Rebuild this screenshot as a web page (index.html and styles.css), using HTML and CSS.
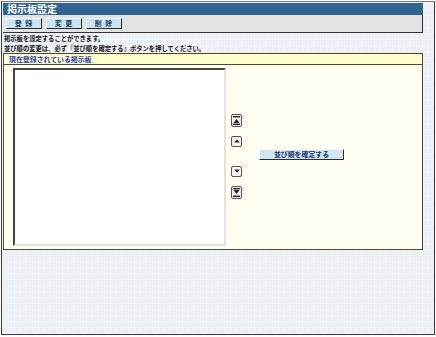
FILE: index.html
```html
<!DOCTYPE html>
<html lang="ja">
<head>
    <meta charset="UTF-8">
    <meta name="viewport" content="width=device-width, initial-scale=1.0">
    <title>掲示板設定</title>
    <link rel="stylesheet" href="styles.css">
</head>
<body>
    <div class="frame">
        <div class="title-bar">掲示板設定</div>

        <div class="toolbar">
            <button class="tool-btn">登 録</button>
            <button class="tool-btn">変 更</button>
            <button class="tool-btn">削 除</button>
        </div>

        <p class="note">掲示板を設定することができます。</p>
        <p class="note">並び順の変更は、必ず『並び順を確定する』ボタンを押してください。</p>

        <div class="panel">
            <div class="panel-header">現在登録されている掲示板</div>
            <div class="panel-body">
                <div class="listbox"></div>

                <div class="order-buttons">
                    <button class="arrow-btn tall" title="先頭へ">
                        <svg width="7" height="9" viewBox="0 0 7 9"><rect x="0" y="0" width="7" height="1.4" fill="#222"/><path d="M3.5 3 L6.5 7 L0.5 7 Z" fill="#222"/><rect x="0" y="7.6" width="7" height="1.4" fill="#222"/></svg>
                    </button>
                    <button class="arrow-btn" title="上へ">
                        <svg width="6" height="4" viewBox="0 0 6 4"><path d="M3 0.5 L5.8 3.6 L0.2 3.6 Z" fill="#222"/></svg>
                    </button>
                    <button class="arrow-btn gap-top" title="下へ">
                        <svg width="6" height="4" viewBox="0 0 6 4"><path d="M3 3.5 L5.8 0.4 L0.2 0.4 Z" fill="#222"/></svg>
                    </button>
                    <button class="arrow-btn tall" title="最後へ">
                        <svg width="7" height="9" viewBox="0 0 7 9"><rect x="0" y="0" width="7" height="1.4" fill="#222"/><path d="M3.5 6 L6.5 2 L0.5 2 Z" fill="#222"/><rect x="0" y="7.6" width="7" height="1.4" fill="#222"/></svg>
                    </button>
                </div>

                <div class="confirm-wrap">
                    <button class="confirm-btn">並び順を確定する</button>
                </div>
            </div>
        </div>
    </div>
</body>
</html>
```

FILE: styles.css
```css
body {
    margin: 0;
    background: #ffffff;
    font-family: "Noto Sans CJK JP", "Liberation Sans", sans-serif;
}

.frame {
    margin: 1px 0 0 1px;
    width: 420px;
    height: 331px;
    padding: 1px 11px 0 1px;
    border: 1px solid #3a3a3a;
    border-top-color: #777;
    background-color: #edf1f6;
    background-image:
        repeating-linear-gradient(0deg, rgba(255,255,255,0.22) 0 1px, transparent 1px 6px),
        repeating-linear-gradient(90deg, rgba(255,255,255,0.22) 0 1px, transparent 1px 6px);
}

.title-bar {
    height: 12px;
    line-height: 12px;
    padding-left: 4px;
    background: #2e6593;
    color: #ffffff;
    font-size: 10px;
    font-weight: bold;
}

.toolbar {
    display: flex;
    gap: 4px;
    height: 14px;
    padding: 3px 0 0 3px;
    background: #e3e3e3;
    border-right: 1px solid #333;
    border-bottom: 1px solid #333;
}

.tool-btn {
    width: 36px;
    height: 11px;
    padding: 0;
    background: #c9e5ee;
    border: 1px solid #f4fafc;
    border-right-color: #2a2a2a;
    border-bottom-color: #2a2a2a;
    color: #1c3a6a;
    font-family: inherit;
    font-size: 7px;
    font-weight: bold;
    line-height: 9px;
    letter-spacing: 1px;
}

.note {
    margin: 0;
    padding-left: 1px;
    height: 10px;
    line-height: 10px;
    font-size: 6.3px;
    font-weight: bold;
    color: #111;
    white-space: nowrap;
}

.note:first-of-type {
    margin-top: 1px;
}

.panel {
    margin-top: -1px;
    border: 1px solid #4c4c34;
    background: #fffff2;
}

.panel-header {
    height: 10px;
    line-height: 10px;
    padding-left: 5px;
    background: #ffffcc;
    border-bottom: 1px solid #4c4c34;
    color: #1f3fc0;
    font-size: 6.9px;
    font-weight: bold;
}

.panel-body {
    display: flex;
    align-items: center;
    padding: 3px 0 3px 9px;
}

.listbox {
    width: 209px;
    height: 174px;
    background: #ffffff;
    border: 2px solid #444;
    border-right-color: #e2e2da;
    border-bottom-color: #e2e2da;
}

.order-buttons {
    display: flex;
    flex-direction: column;
    gap: 9px;
    margin-left: 5px;
    margin-top: -2px;
}

.arrow-btn {
    display: flex;
    align-items: center;
    justify-content: center;
    width: 11px;
    height: 11px;
    padding: 0;
    background: #f4f4f0;
    border: 1px solid #555;
    border-radius: 2px;
}

.arrow-btn.tall {
    height: 13px;
}

.arrow-btn.gap-top {
    margin-top: 10px;
}

.confirm-wrap {
    margin-left: 17px;
    margin-top: -14px;
}

.confirm-btn {
    width: 85px;
    height: 11px;
    padding: 0;
    background: #cfe7f1;
    border: 1px solid #f4fafc;
    border-right-color: #2a2a2a;
    border-bottom-color: #2a2a2a;
    color: #1a3370;
    font-family: inherit;
    font-size: 6.9px;
    font-weight: bold;
    line-height: 9px;
}
```
